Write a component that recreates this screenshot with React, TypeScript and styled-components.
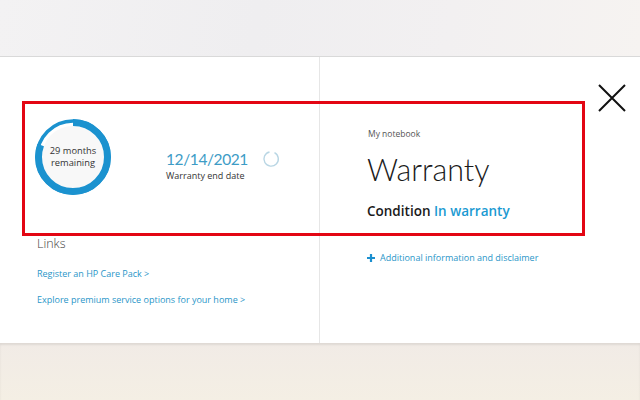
import styled, { createGlobalStyle } from "styled-components";

const Global = createGlobalStyle`
  html, body {
    margin: 0;
    padding: 0;
  }
  body {
    font-family: "Open Sans", "Liberation Sans", sans-serif;
    color: #222;
  }
`;

const Page = styled.div`
  width: 640px;
  height: 400px;
  display: flex;
  flex-direction: column;
  overflow: hidden;
`;

const TopBand = styled.div`
  height: 56px;
  background: linear-gradient(100deg, #f3f2f3 0%, #efeef0 40%, #f2f0f1 70%, #f6f3f1 100%);
  border-bottom: 1px solid #d9d9d9;
`;

const Panel = styled.div`
  position: relative;
  height: 286px;
  background: #fff;
  display: grid;
  grid-template-columns: 320px 1fr;
`;

const LeftCol = styled.div`
  border-right: 1px solid #e6e6e6;
  padding: 62px 0 0 35px;
  display: flex;
  flex-direction: column;
`;

const RightCol = styled.div`
  padding: 71px 0 0 47px;
  display: flex;
  flex-direction: column;
`;

const StatusRow = styled.div`
  display: flex;
  align-items: center;
`;

const Ring = styled.div`
  position: relative;
  width: 76px;
  height: 76px;
  flex-shrink: 0;
  svg {
    position: absolute;
    inset: 0;
  }
`;

const RingText = styled.div`
  position: absolute;
  inset: 0;
  display: flex;
  align-items: center;
  justify-content: center;
  text-align: center;
  font-size: 9.3px;
  line-height: 12px;
  color: #333;
  padding-bottom: 1px;
`;

const DateBlock = styled.div`
  margin-left: 55px;
  margin-top: 18px;
  display: flex;
  flex-direction: column;
`;

const DateLine = styled.div`
  display: flex;
  align-items: center;
  gap: 14px;
`;

const DateValue = styled.span`
  font-family: Lato, "Open Sans", sans-serif;
  font-size: 15.5px;
  font-weight: 400;
  letter-spacing: -0.4px;
  color: #3d9cc6;
  line-height: 18px;
`;

const Caption = styled.span`
  font-size: 9px;
  color: #333;
  margin-top: 1px;
`;

const LinksTitle = styled.div`
  margin-top: 40px;
  font-size: 12.5px;
  color: #444;
  font-weight: 300;
  margin-left: 2px;
`;

const LinkList = styled.div`
  margin-top: 15px;
  display: flex;
  flex-direction: column;
  gap: 13px;
  margin-left: 2px;
`;

const Link = styled.a`
  font-size: 9px;
  color: #2a96c8;
  text-decoration: none;
`;

const Eyebrow = styled.div`
  font-size: 8.5px;
  color: #555;
  margin-left: 1px;
`;

const Title = styled.h1`
  margin: 12px 0 0;
  font-family: Lato, "Open Sans", sans-serif;
  font-size: 30.5px;
  font-weight: 300;
  color: #1a1a1a;
  line-height: 36px;
`;

const Condition = styled.div`
  margin-top: 15px;
  font-size: 13.5px;
  font-weight: 600;
  color: #1a1a1a;
  span {
    color: #1b9ad2;
  }
`;

const MoreInfo = styled.div`
  margin-top: 31px;
  display: flex;
  align-items: center;
  gap: 5px;
  font-size: 9px;
  color: #2a96c8;
`;

const Highlight = styled.div`
  position: absolute;
  left: 22px;
  top: 44px;
  width: 563px;
  height: 135px;
  box-sizing: border-box;
  border: 3px solid #e30613;
  pointer-events: none;
`;

const Close = styled.button`
  position: absolute;
  top: 26px;
  right: 13px;
  width: 30px;
  height: 30px;
  padding: 0;
  border: none;
  background: none;
`;

const BottomBand = styled.div`
  flex: 1;
  background: linear-gradient(180deg, #f1ebe6 0%, #f4efe4 100%);
  box-shadow: inset 0 2px 2px rgba(0, 0, 0, 0.08);
`;

const ProgressRing = () => {
  const r = 34.5;
  const c = 2 * Math.PI * r;
  const frac = 29 / 36;
  return (
    <svg width="76" height="76" viewBox="0 0 76 76">
      <circle cx="38" cy="38" r="31" fill="#f8f8f8" />
      <circle cx="38" cy="38" r="36" fill="none" stroke="#1b92cf" strokeWidth="3.5" />
      <circle
        cx="38"
        cy="38"
        r={r}
        fill="none"
        stroke="#1b92cf"
        strokeWidth="7"
        strokeDasharray={`${c * frac} ${c}`}
        transform="rotate(-90 38 38)"
      />
    </svg>
  );
};

const Spinner = () => (
  <svg width="18" height="18" viewBox="0 0 18 18">
    <path
      d="M12.5 2.6 A7.2 7.2 0 1 1 7.5 1.95"
      fill="none"
      stroke="#b9d6e4"
      strokeWidth="1.4"
    />
  </svg>
);

const App = () => {
  return (
    <>
      <Global />
      <Page>
        <TopBand />
        <Panel>
          <LeftCol>
            <StatusRow>
              <Ring>
                <ProgressRing />
                <RingText>
                  29 months
                  <br />
                  remaining
                </RingText>
              </Ring>
              <DateBlock>
                <DateLine>
                  <DateValue>12/14/2021</DateValue>
                  <Spinner />
                </DateLine>
                <Caption>Warranty end date</Caption>
              </DateBlock>
            </StatusRow>
            <LinksTitle>Links</LinksTitle>
            <LinkList>
              <Link href="#">Register an HP Care Pack &gt;</Link>
              <Link href="#">Explore premium service options for your home &gt;</Link>
            </LinkList>
          </LeftCol>
          <RightCol>
            <Eyebrow>My notebook</Eyebrow>
            <Title>Warranty</Title>
            <Condition>
              Condition <span>In warranty</span>
            </Condition>
            <MoreInfo>
              <svg width="8" height="8" viewBox="0 0 8 8">
                <path d="M4 0v8M0 4h8" stroke="#1b8fcf" strokeWidth="2.2" />
              </svg>
              Additional information and disclaimer
            </MoreInfo>
          </RightCol>
          <Highlight />
          <Close aria-label="Close">
            <svg width="30" height="30" viewBox="0 0 30 30">
              <path d="M2 2L28 28M28 2L2 28" stroke="#111" strokeWidth="2" />
            </svg>
          </Close>
        </Panel>
        <BottomBand />
      </Page>
    </>
  );
};

export default App;
